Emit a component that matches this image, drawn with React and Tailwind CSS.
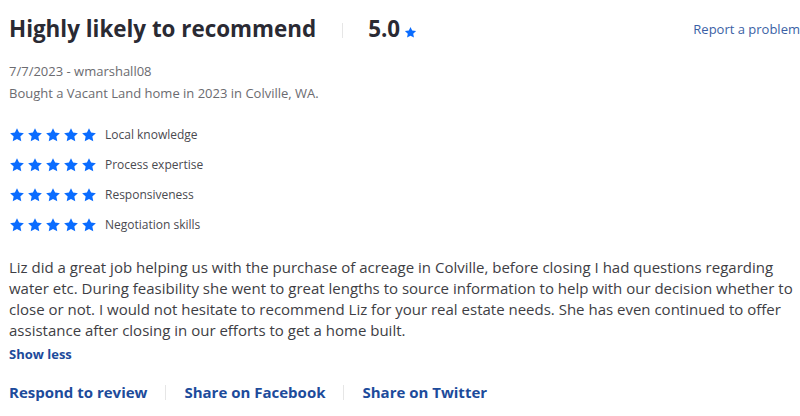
import React from 'react'

const Star = ({ className }) => (
  <svg viewBox="0 0 24 24" className={className} fill="currentColor">
    <path d="M12 1.8l3.1 6.6 7.2.9-5.3 5 1.4 7.1L12 17.9l-6.4 3.5 1.4-7.1-5.3-5 7.2-.9z" />
  </svg>
)

const ratings = ['Local knowledge', 'Process expertise', 'Responsiveness', 'Negotiation skills']

const App = () => {
  return (
    <div className="w-[800px] h-[416px] bg-white pl-[9px] font-['Open_Sans',sans-serif] overflow-hidden">
      <div className="flex items-center h-[32px] mt-[13px]">
        <h1 className="text-[22.4px] font-bold text-[#2a2a33] leading-[32px]">Highly likely to recommend</h1>
        <span className="w-px h-[15px] bg-[#e6e6e6] ml-[26px] mr-[25px] mt-[2px]"></span>
        <span className="text-[22.4px] font-bold text-[#2a2a33] leading-[32px]">5.0</span>
        <Star className="w-[13px] h-[13px] text-[#0a6cff] ml-[4px] mt-[6px]" />
        <a className="ml-auto text-[13px] text-[#3b5fa5] mt-[1px]">Report a problem</a>
      </div>

      <div className="mt-[15px] text-[13px] text-[#6b6b70] leading-[22px]">
        <p>7/7/2023 - wmarshall08</p>
        <p>Bought a Vacant Land home in 2023 in Colville, WA.</p>
      </div>

      <div className="mt-[21px] flex flex-col gap-[10px]">
        {ratings.map(r => (
          <div key={r} className="flex items-center h-[20px]">
            <div className="flex gap-[2px]">
              {[0, 1, 2, 3, 4].map(i => (
                <Star key={i} className="w-[16px] h-[16px] text-[#0a6cff]" />
              ))}
            </div>
            <span className="ml-[8px] text-[12px] text-[#4a4a50]">{r}</span>
          </div>
        ))}
      </div>

      <p className="mt-[22px] text-[15px] leading-[21px] text-[#3e3e44]">
        Liz did a great job helping us with the purchase of acreage in Colville, before closing I had questions regarding water etc. During feasibility she went to great lengths to source information to help with our decision whether to close or not. I would not hesitate to recommend Liz for your real estate needs. She has even continued to offer assistance after closing in our efforts to get a home built.
      </p>
      <a className="block mt-[3px] text-[13px] font-bold text-[#1d4b9b] leading-[20px]">Show less</a>

      <div className="flex items-center mt-[17px] text-[15px] font-bold text-[#1d4b9b] leading-[22px]">
        <a>Respond to review</a>
        <span className="w-px h-[15px] bg-[#e6e6e6] mx-[18px]"></span>
        <a>Share on Facebook</a>
        <span className="w-px h-[15px] bg-[#e6e6e6] mx-[18px]"></span>
        <a>Share on Twitter</a>
      </div>
    </div>
  )
}

export default App
